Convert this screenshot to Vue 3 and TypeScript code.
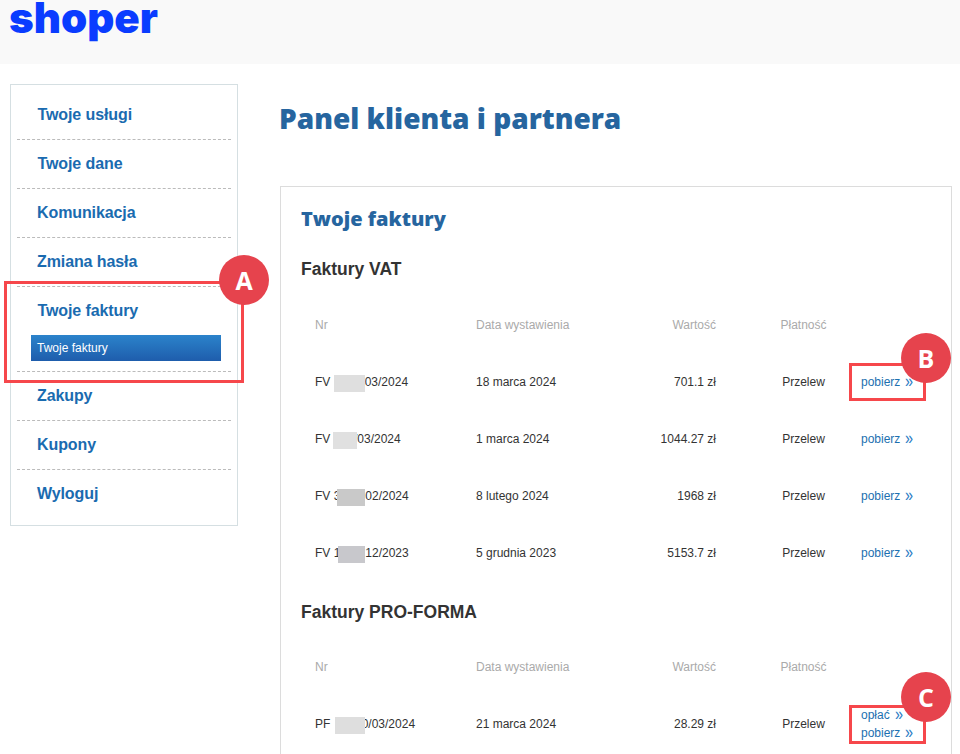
<script setup lang="ts">
interface Invoice {
  pre: string
  redact: number
  before: number
  after: number
  shade: string
  post: string
  date: string
  value: string
  pay?: boolean
}
const menuTop = [
  { label: 'Twoje usługi', shift: 1 },
  { label: 'Twoje dane', shift: 1 },
  { label: 'Komunikacja', shift: 0 },
  { label: 'Zmiana hasła', shift: 0 },
]
const menuBottom = ['Zakupy', 'Kupony', 'Wyloguj']
const vat: Invoice[] = [
  { pre: 'FV ', redact: 31, before: 0, after: 0, shade: '#dfdfdf', post: '03/2024', date: '18 marca 2024', value: '701.1 zł' },
  { pre: 'FV ', redact: 24, before: -1, after: -2.7, shade: '#e0e0e0', post: '/03/2024', date: '1 marca 2024', value: '1044.27 zł' },
  { pre: 'FV 3', redact: 28, before: -3, after: 0, shade: '#c9c9c9', post: '02/2024', date: '8 lutego 2024', value: '1968 zł' },
  { pre: 'FV 1', redact: 27, before: -2, after: 0, shade: '#c8c8cc', post: '12/2023', date: '5 grudnia 2023', value: '5153.7 zł' },
]
const proforma: Invoice[] = [
  { pre: 'PF ', redact: 30, before: 1, after: -3, shade: '#dedede', post: '0/03/2024', date: '21 marca 2024', value: '28.29 zł', pay: true },
]
const sections = [
  { title: 'Faktury VAT', rows: vat },
  { title: 'Faktury PRO-FORMA', rows: proforma },
]
</script>

<template>
  <div class="page">
    <header class="top"><span class="logo">shoper</span></header>
    <div class="body">
      <nav class="side">
        <a v-for="m in menuTop" :key="m.label" class="item" :class="{ shifted: m.shift }">{{ m.label }}</a>
        <div class="group">
          <a class="item plain shifted">Twoje faktury</a>
          <a class="sub">Twoje faktury</a>
        </div>
        <a v-for="m in menuBottom" :key="m" class="item">{{ m }}</a>
      </nav>
      <main class="main">
        <h1>Panel klienta i partnera</h1>
        <section class="card">
          <h2>Twoje faktury</h2>
          <template v-for="s in sections" :key="s.title">
            <h3>{{ s.title }}</h3>
            <div class="row head">
              <div>Nr</div>
              <div>Data wystawienia</div>
              <div class="num">Wartość</div>
              <div class="payc">Płatność</div>
              <div></div>
            </div>
            <div v-for="r in s.rows" :key="r.date" class="row">
              <div class="nr">
                <span>{{ r.pre }}</span><span
                  class="redact"
                  :style="{ width: r.redact + 'px', marginLeft: r.before + 'px', marginRight: r.after + 'px', background: r.shade }"
                ></span><span>{{ r.post }}</span>
              </div>
              <div>{{ r.date }}</div>
              <div class="num">{{ r.value }}</div>
              <div class="payc">Przelew</div>
              <div class="acts">
                <a v-if="r.pay">opłać<span class="chev">»</span></a>
                <a>pobierz<span class="chev">»</span></a>
              </div>
            </div>
          </template>
        </section>
      </main>
    </div>
    <div class="mark box-a"></div>
    <div class="mark box-b"></div>
    <div class="mark box-c"></div>
    <div class="badge badge-a">A</div>
    <div class="badge badge-b">B</div>
    <div class="badge badge-c">C</div>
  </div>
</template>

<style>
html, body { margin: 0; overflow: hidden; background: #fff; }
</style>

<style scoped>
.page {
  position: relative;
  width: 960px;
  height: 754px;
  overflow: hidden;
  font-family: "Liberation Sans", Arial, sans-serif;
  font-size: 12px;
  color: #333;
  background: #fff;
}
.top {
  height: 64px;
  background: #f9f9f9;
  padding-left: 9px;
}
.logo {
  display: block;
  font-family: Inter, sans-serif;
  font-weight: 900;
  font-size: 42px;
  line-height: 36px;
  color: #0a3cff;
  letter-spacing: 0;
}
.body {
  display: flex;
  align-items: flex-start;
  padding: 20px 8px 0 10px;
}
.side {
  width: 228px;
  height: 442px;
  box-sizing: border-box;
  flex: none;
  border: 1px solid #d5dfe2;
  padding: 6px 6px 0;
  display: flex;
  flex-direction: column;
}
.item {
  display: flex;
  align-items: center;
  height: 49px;
  box-sizing: border-box;
  flex: none;
  border-bottom: 1px dashed #bbb;
  padding-left: 20px;
  font-size: 16px;
  font-weight: 700;
  letter-spacing: -0.1px;
  color: #1a6bb0;
}
.item.shifted { padding-left: 20.5px; }
.item:last-child { border-bottom: 0; height: 47px; }
.group {
  height: 85px;
  flex: none;
  box-sizing: border-box;
  border-bottom: 1px dashed #bbb;
}
.item.plain { border-bottom: 0; height: 48px; }
.sub {
  display: flex;
  align-items: center;
  margin: 0 10px 0 14px;
  height: 26px;
  padding-left: 6px;
  font-size: 12px;
  color: #fff;
  background: linear-gradient(#2b83cb, #1e5dac);
}
.main {
  margin-left: 42px;
  width: 672px;
  flex: none;
}
h1 {
  margin: 0 0 0 -1px;
  padding-top: 14px;
  height: 102px;
  box-sizing: border-box;
  font-family: "Open Sans", sans-serif;
  font-size: 28px;
  font-weight: 800;
  line-height: 40px;
  color: #26659f;
}
.card {
  border: 1px solid #dcdcdc;
  height: 700px;
  padding: 15px 19px 0 20px;
  box-sizing: border-box;
}
h2 {
  margin: 0;
  font-family: "Open Sans", sans-serif;
  font-size: 20px;
  font-weight: 800;
  line-height: 34px;
  color: #26659f;
}
h3 {
  margin: 24px 0 18px;
  font-size: 17.5px;
  font-weight: 700;
  line-height: 18px;
  color: #333;
}
.row + h3 { margin: 22px 0 17px; }
.row {
  display: grid;
  grid-template-columns: 175px 144px 96px 131px 85px;
  height: 57px;
  align-items: center;
  box-sizing: border-box;
  font-size: 12px;
  color: #333;
}
.row > div:first-child { padding-left: 14px; }
.row.head { color: #aaa; }
.num { text-align: right; }
.payc { text-align: center; padding-left: 44px; }
.nr {
  display: flex;
  align-items: center;
  white-space: pre;
}
.redact {
  position: relative;
  z-index: 1;
  flex: none;
  height: 17px;
  margin-top: 3px;
}
.acts {
  display: flex;
  flex-direction: column;
  gap: 4px;
  padding-left: 14px;
  color: #1c70b0;
}
.acts a {
  display: flex;
  align-items: center;
  height: 14px;
  line-height: 14px;
  white-space: nowrap;
}
.chev {
  margin: -2px 0 0 4px;
  font-size: 18px;
  line-height: 14px;
  color: #2a7cc4;
  transform: scaleX(0.8);
}
.mark {
  position: absolute;
  border: 3px solid #f6474b;
  box-sizing: border-box;
}
.box-a { left: 4px; top: 281px; width: 240px; height: 102px; }
.box-b { left: 849px; top: 363px; width: 77px; height: 38px; }
.box-c { left: 849px; top: 705px; width: 77px; height: 39px; }
.badge {
  position: absolute;
  width: 50px;
  height: 50px;
  border-radius: 50%;
  background: #e6434d;
  color: #fff;
  display: flex;
  align-items: center;
  justify-content: center;
  font-size: 25px;
  font-weight: 700;
  font-family: "Open Sans", sans-serif;
}
.badge-a { left: 219px; top: 255px; }
.badge-b { left: 901px; top: 333px; }
.badge-c { left: 901px; top: 672px; }
</style>
